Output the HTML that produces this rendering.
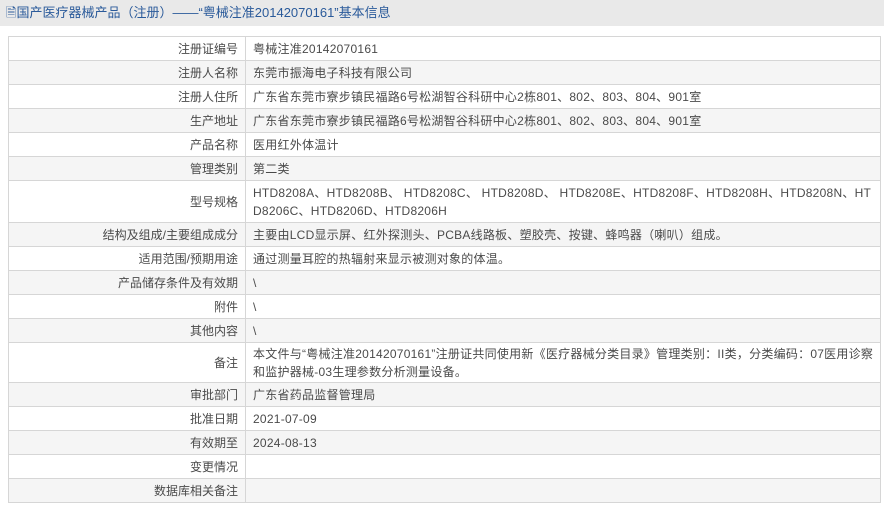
<!DOCTYPE html>
<html><head><meta charset="utf-8"><style>
body{margin:0;width:884px;height:507px;background:#fff;font-family:"Liberation Sans","Noto Sans CJK SC",sans-serif;font-size:12px;color:#4a4a4a;overflow:hidden}
.hd{height:26px;background:#e9e9e9;color:#2a5a9a;font-size:13px;line-height:26px;padding-left:6px}
table{position:absolute;left:8px;top:36px;width:873px;border-collapse:collapse}
td{border:1px solid #d6d6d6;padding:0 6px 0 7px;height:23px;line-height:18px;word-break:break-all;letter-spacing:0.25px}
td.l{width:222px;text-align:right;padding-right:7px;letter-spacing:0}
tr:nth-child(even){background:#f5f5f5}
</style></head><body>
<div class="hd">🗎国产医疗器械产品（注册）——“粤械注准20142070161”基本信息</div>
<table>
<tr><td class="l">注册证编号</td><td>粤械注准20142070161</td></tr>
<tr><td class="l">注册人名称</td><td>东莞市振海电子科技有限公司</td></tr>
<tr><td class="l">注册人住所</td><td>广东省东莞市寮步镇民福路6号松湖智谷科研中心2栋801、802、803、804、901室</td></tr>
<tr><td class="l">生产地址</td><td>广东省东莞市寮步镇民福路6号松湖智谷科研中心2栋801、802、803、804、901室</td></tr>
<tr><td class="l">产品名称</td><td>医用红外体温计</td></tr>
<tr><td class="l">管理类别</td><td>第二类</td></tr>
<tr><td class="l" style="height:41px">型号规格</td><td>HTD8208A、HTD8208B、 HTD8208C、 HTD8208D、 HTD8208E、HTD8208F、HTD8208H、HTD8208N、HTD8206C、HTD8206D、HTD8206H</td></tr>
<tr><td class="l">结构及组成/主要组成成分</td><td>主要由LCD显示屏、红外探测头、PCBA线路板、塑胶壳、按键、蜂鸣器（喇叭）组成。</td></tr>
<tr><td class="l">适用范围/预期用途</td><td>通过测量耳腔的热辐射来显示被测对象的体温。</td></tr>
<tr><td class="l">产品储存条件及有效期</td><td>\</td></tr>
<tr><td class="l">附件</td><td>\</td></tr>
<tr><td class="l">其他内容</td><td>\</td></tr>
<tr><td class="l" style="height:39px">备注</td><td>本文件与“粤械注准20142070161”注册证共同使用新《医疗器械分类目录》管理类别：II类，分类编码：07医用诊察和监护器械-03生理参数分析测量设备。</td></tr>
<tr><td class="l">审批部门</td><td>广东省药品监督管理局</td></tr>
<tr><td class="l">批准日期</td><td>2021-07-09</td></tr>
<tr><td class="l">有效期至</td><td>2024-08-13</td></tr>
<tr><td class="l">变更情况</td><td></td></tr>
<tr><td class="l">数据库相关备注</td><td></td></tr>
</table>
</body></html>
